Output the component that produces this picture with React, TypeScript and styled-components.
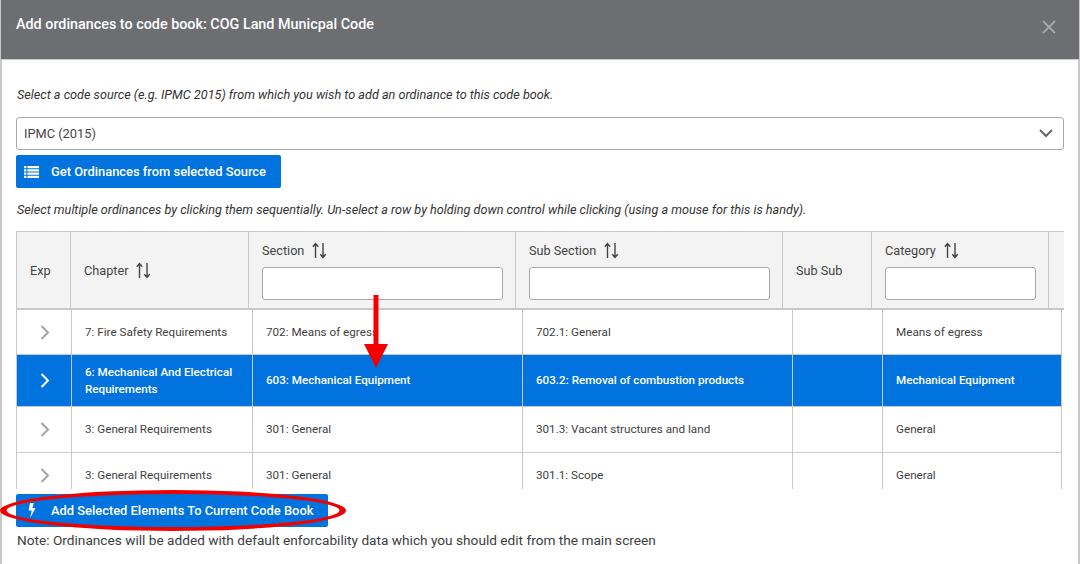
import React from "react";
import styled, { createGlobalStyle } from "styled-components";

const Global = createGlobalStyle`
  html, body { margin: 0; padding: 0; background: #fff; }
  body { font-family: Roboto, "Liberation Sans", sans-serif; color: #3d3d3d; overflow: hidden; }
  * { box-sizing: border-box; }
`;

const Dialog = styled.div`
  position: relative;
  width: 1080px;
  height: 564px;
  background: #fff;
  border-left: 2px solid #c8c8c8;
  border-right: 2px solid #c8c8c8;
`;
const Header = styled.header`
  display: flex;
  justify-content: space-between;
  height: 60px;
  margin: 0 -1px;
  padding: 16px 23px 0 15px;
  background: #6c6e72;
  border-bottom: 1px solid #c8c8c8;
  color: #fff;
`;
const Title = styled.h1`
  margin: 0;
  font-size: 14.35px;
  line-height: 18px;
  font-weight: 500;
`;
const Close = styled.svg`
  width: 14px;
  height: 14px;
  margin-top: 4px;
  stroke: #a6a7aa;
  stroke-width: 1.8;
  fill: none;
`;
const Body = styled.main`
  padding: 27px 14px 0 14px;
`;
const Hint = styled.p<{ $gap: number }>`
  margin: 0 0 ${(p) => p.$gap}px 1px;
  font-size: 12.66px;
  line-height: 16px;
  font-style: italic;
  color: #333;
`;
const SelectBox = styled.div`
  display: flex;
  align-items: center;
  justify-content: space-between;
  height: 33px;
  padding: 0 10px 0 7px;
  border: 1px solid #a8a8a8;
  border-radius: 3px;
  font-size: 12.8px;
  color: #444;
`;
const Button = styled.button<{ $width: number }>`
  display: flex;
  align-items: center;
  width: ${(p) => p.$width}px;
  height: 33px;
  padding: 0 0 0 8px;
  border: 0;
  border-radius: 2px;
  background: #0073de;
  color: #fff;
  font-family: inherit;
  font-size: 12.9px;
  font-weight: 500;
`;
const ButtonIcon = styled.span`
  display: flex;
  justify-content: center;
  width: 15px;
  margin-right: 12px;
`;
const GetButton = styled(Button)`
  margin: 5px 0 14px;
`;
const Table = styled.div`
  width: 1048px;
`;
const HeadRow = styled.div`
  display: grid;
  grid-template-columns: 54px 178px 267px 267px 89px 177px 1fr;
  height: 79px;
  background: #f3f3f3;
  border-top: 1px solid #c8c8c8;
  border-bottom: 2px solid #c8c8c8;
  border-left: 1px solid #c8c8c8;
`;
const HeadCell = styled.div`
  display: flex;
  flex-direction: column;
  justify-content: center;
  padding: 0 12px 0 13px;
  border-right: 1px solid #c8c8c8;
  font-size: 12.7px;
  color: #444;
`;
const BlankHead = styled.div`
  background: #f3f3f3;
`;
const HeadLabel = styled.div`
  display: flex;
  align-items: center;
  gap: 8px;
  height: 18px;
`;
const FilterInput = styled.input`
  width: 100%;
  height: 33px;
  margin: 8px 0 -1px;
  padding: 0 6px;
  background: #fff;
  border: 1px solid #a8a8a8;
  border-radius: 3px;
  outline: none;
`;
const Rows = styled.div`
  height: 179px;
  width: 1046px;
  overflow: hidden;
`;
const Row = styled.div<{ $h: number; $selected?: boolean }>`
  display: grid;
  grid-template-columns: 55px 181px 270px 270px 90px 179px;
  height: ${(p) => p.$h}px;
  background: ${(p) => (p.$selected ? "#0073de" : "#fff")};
  color: ${(p) => (p.$selected ? "#fff" : "#3f3f3f")};
  font-size: ${(p) => (p.$selected ? 11.65 : 11.68)}px;
  font-weight: ${(p) => (p.$selected ? 500 : 400)};
  border-left: 1px solid #c8c8c8;
  border-bottom: 1px solid #c8c8c8;
`;
const Cell = styled.div`
  display: flex;
  align-items: center;
  padding: 0 13px;
  border-right: 1px solid #c8c8c8;
  line-height: 17px;
`;
const ExpCell = styled(Cell)<{ $selected?: boolean }>`
  justify-content: center;
  padding: 0 0 0 1px;
  color: ${(p) => (p.$selected ? "#fff" : "#a3a3a3")};
`;
const Footer = styled.div`
  margin-top: 5px;
`;
const Note = styled.p`
  margin: 5px 0 0 1px;
  font-size: 13.66px;
  line-height: 16px;
  color: #3d3d3d;
`;
const Arrow = styled.svg`
  position: absolute;
  left: 362px;
  top: 295px;
  width: 24px;
  height: 73px;
`;
const Ellipse = styled.svg`
  position: absolute;
  left: -4px;
  top: 488px;
  width: 350px;
  height: 45px;
`;

const Sort = () => (
  <svg width="16" height="17" viewBox="0 0 16 17" fill="none" stroke="#444" strokeWidth="1.4">
    <path d="M3.500 16V2M.8 4.800 3.500 1.600 6.200 4.800M11 1v14M8.300 12.200l2.700 3.200 2.700-3.200" />
  </svg>
);
const Chevron = () => (
  <svg width="10" height="15" viewBox="0 0 10 15" fill="none" stroke="currentColor" strokeWidth="2">
    <path d="M1.500 1 8 7.500 1.500 14" />
  </svg>
);
const ListIcon = () => (
  <svg width="15" height="12" viewBox="0 0 15 12" fill="#fff">
    <path d="M0 0h2.400v2.200H0zM3.400 0H15v2.200H3.400zM0 3.200h2.400v2.200H0zM3.400 3.200H15v2.200H3.400zM0 6.500h2.400v2.200H0zM3.400 6.500H15v2.200H3.400zM0 9.800h2.400V12H0zM3.400 9.800H15V12H3.400z" />
  </svg>
);
const Bolt = () => (
  <svg width="8" height="15" viewBox="0 0 8 15" fill="#fff">
    <path d="M2 0h3.800L4.400 5H7.600L2.200 15l1.500-7.600H.6z" />
  </svg>
);

const rows = [
  { h: 45, cells: ["7: Fire Safety Requirements", "702: Means of egress", "702.1: General", "", "Means of egress"] },
  { h: 52, selected: true, cells: ["6: Mechanical And Electrical Requirements", "603: Mechanical Equipment", "603.2: Removal of combustion products", "", "Mechanical Equipment"] },
  { h: 46, cells: ["3: General Requirements", "301: General", "301.3: Vacant structures and land", "", "General"] },
  { h: 46, cells: ["3: General Requirements", "301: General", "301.1: Scope", "", "General"] },
];

export default function App() {
  return (
    <Dialog>
      <Global />
      <Header>
        <Title>Add ordinances to code book: COG Land Municpal Code</Title>
        <Close viewBox="0 0 14 14"><path d="M1 1l12 12M13 1 1 13" /></Close>
      </Header>
      <Body>
        <Hint $gap={14}>Select a code source (e.g. IPMC 2015) from which you wish to add an ordinance to this code book.</Hint>
        <SelectBox>
          IPMC (2015)
          <svg width="14" height="9" viewBox="0 0 14 9" fill="none" stroke="#666" strokeWidth="2"><path d="M1 1l6 6 6-6" /></svg>
        </SelectBox>
        <GetButton $width={265}>
          <ButtonIcon><ListIcon /></ButtonIcon>
          Get Ordinances from selected Source
        </GetButton>
        <Hint $gap={13}>Select multiple ordinances by clicking them sequentially. Un-select a row by holding down control while clicking (using a mouse for this is handy).</Hint>
        <Table>
          <HeadRow>
            <HeadCell>Exp</HeadCell>
            <HeadCell><HeadLabel>Chapter <Sort /></HeadLabel></HeadCell>
            <HeadCell><HeadLabel>Section <Sort /></HeadLabel><FilterInput /></HeadCell>
            <HeadCell><HeadLabel>Sub Section <Sort /></HeadLabel><FilterInput /></HeadCell>
            <HeadCell>Sub Sub</HeadCell>
            <HeadCell><HeadLabel>Category <Sort /></HeadLabel><FilterInput /></HeadCell>
            <BlankHead />
          </HeadRow>
          <Rows>
            {rows.map((r, i) => (
              <Row key={i} $h={r.h} $selected={r.selected}>
                <ExpCell $selected={r.selected}><Chevron /></ExpCell>
                {r.cells.map((c, j) => <Cell key={j}>{c}</Cell>)}
              </Row>
            ))}
          </Rows>
        </Table>
        <Footer>
          <Button $width={312}>
            <ButtonIcon><Bolt /></ButtonIcon>
            Add Selected Elements To Current Code Book
          </Button>
          <Note>Note: Ordinances will be added with default enforcability data which you should edit from the main screen</Note>
        </Footer>
      </Body>
      <Arrow viewBox="0 0 24 73">
        <path fill="#f50000" d="M9.500 0h5v49H24L12 73 0 49h9.500z" />
      </Arrow>
      <Ellipse viewBox="0 0 350 45">
        <path
          fillRule="evenodd"
          fill="#f20000"
          d="M2 22.500a173 20.500 0 1 0 346 0a173 20.500 0 1 0-346 0zM8.500 22.500a166.500 16.500 0 1 0 333 0a166.500 16.500 0 1 0-333 0z"
        />
      </Ellipse>
    </Dialog>
  );
}
